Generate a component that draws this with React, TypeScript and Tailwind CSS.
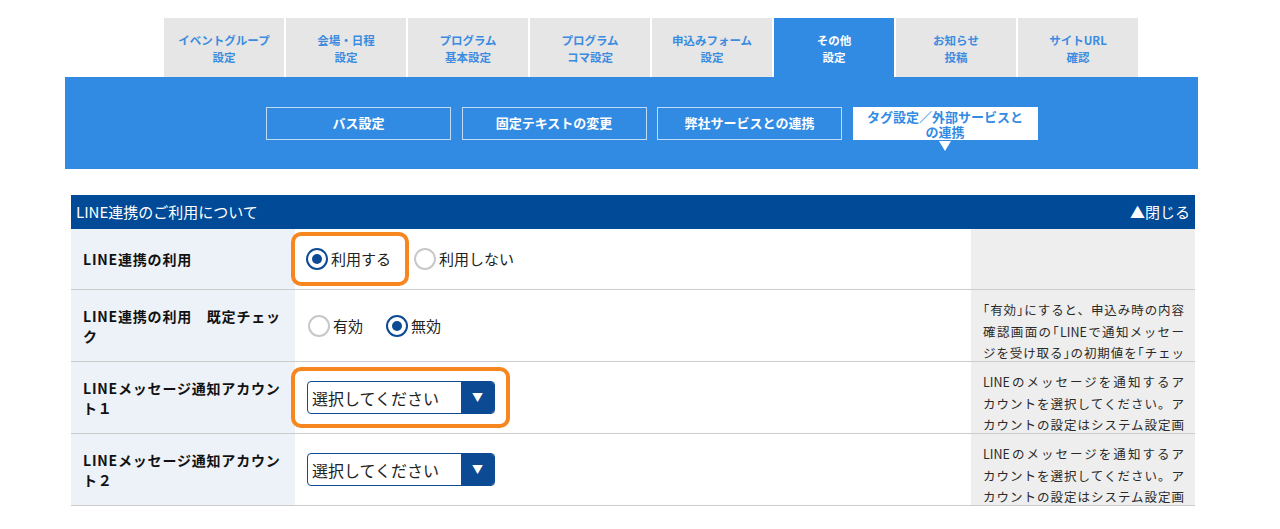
const TABS = [
  ["イベントグループ", "設定"],
  ["会場・日程", "設定"],
  ["プログラム", "基本設定"],
  ["プログラム", "コマ設定"],
  ["申込みフォーム", "設定"],
  ["その他", "設定"],
  ["お知らせ", "投稿"],
  ["サイトURL", "確認"],
];

const SUB_BUTTONS = ["バス設定", "固定テキストの変更", "弊社サービスとの連携", "タグ設定／外部サービスとの連携"];

const FONT = { fontFamily: '"Noto Sans CJK JP", "Noto Sans", sans-serif' };

// 説明文は枠内で切れるので見えている行だけ持つ
const DESC_DEFAULT = [
  "｢有効｣にすると、申込み時の内容",
  "確認画面の｢LINEで通知メッセー",
  "ジを受け取る｣の初期値を｢チェッ",
];
const DESC_ACCOUNT = [
  "LINEのメッセージを通知するア",
  "カウントを選択してください。ア",
  "カウントの設定はシステム設定画",
];

function Radio({ checked, label }: { checked: boolean; label: string }) {
  return (
    <span className="inline-flex items-center gap-[3px] text-[15px] leading-[22px] text-[#222]">
      {checked ? (
        <span className="flex h-[22px] w-[22px] items-center justify-center rounded-full border-[2.5px] border-[#0d4a94] bg-white">
          <span className="h-[10px] w-[10px] rounded-full bg-[#0d4a94]" />
        </span>
      ) : (
        <span className="h-[22px] w-[22px] rounded-full border-2 border-[#c8c8c8] bg-white" />
      )}
      {label}
    </span>
  );
}

function Select() {
  return (
    <div className="flex h-[33px] w-[188px] overflow-hidden rounded-[4px] border border-[#0d4a94] bg-white">
      <span className="flex flex-1 items-center pl-[4px] text-[16px] text-[#222]">選択してください</span>
      <span className="flex w-[33px] items-center justify-center bg-[#0d4a94] text-[11px] text-white">▼</span>
    </div>
  );
}

function Highlight({ children, box }: { children: React.ReactNode; box: string }) {
  return (
    <span className="relative inline-flex">
      <span className={`absolute rounded-[10px] border-4 border-[#f7861f] ${box}`} />
      {children}
    </span>
  );
}

function Row({
  label,
  children,
  desc,
  h,
}: {
  label: string;
  children: React.ReactNode;
  desc?: string[];
  h: string;
}) {
  return (
    <div className={`flex border-b border-[#cccccc] ${h}`}>
      <div className="flex w-[224px] items-center bg-[#edf1f8] pl-[12px] pr-[11px] text-[14px] font-bold leading-[20px] tracking-[0.8px] text-[#111]">
        {label}
      </div>
      <div className="flex flex-1 items-center px-[11px]">{children}</div>
      <div className="w-[224px] overflow-hidden bg-[#eeeeee] pl-[12px] pr-[11px] pt-[9px] text-[12.5px] leading-[21.5px] text-[#2a2a2a]">
        {desc?.map((l, i) => (
          <div key={i} className="whitespace-nowrap text-justify [text-align-last:justify]">
            {l}
          </div>
        ))}
      </div>
    </div>
  );
}

export default function App() {
  return (
    <div className="h-[529px] w-[1280px] overflow-hidden bg-white" style={FONT}>
      {/* タブ */}
      <div className="flex gap-[2px] pl-[164px] pt-[18px]">
        {TABS.map((t, i) => (
          <div
            key={i}
            className={`flex h-[59px] w-[120px] flex-col items-center justify-center pt-[2px] text-[11.5px] font-bold leading-[17px] ${
              i === 5 ? "bg-[#328be3] text-white" : "bg-[#e6e6e6] text-[#3b8ce0]"
            }`}
          >
            <span>{t[0]}</span>
            <span>{t[1]}</span>
          </div>
        ))}
      </div>

      {/* サブメニュー */}
      <div className="ml-[65px] flex h-[92px] w-[1133px] gap-[10.5px] bg-[#328be3] pl-[201px] pt-[30px]">
        {SUB_BUTTONS.map((b, i) =>
          i === 3 ? (
            <div key={b} className="relative h-[33px] w-[185px]">
              <div className="flex h-[33px] items-center justify-center bg-white px-[12px] text-center text-[13px] font-bold leading-[15px] text-[#328be3]">
                {b}
              </div>
              <span className="absolute left-[86px] top-[34px] h-0 w-0 border-x-[6px] border-t-[10px] border-x-transparent border-t-white" />
            </div>
          ) : (
            <div
              key={b}
              className="flex h-[33px] w-[185px] items-center justify-center border border-white/70 pb-[2px] text-[13px] font-bold text-white"
            >
              {b}
            </div>
          )
        )}
      </div>

      {/* LINE連携 */}
      <div className="ml-[71px] mt-[26px] w-[1124px]">
        <div className="flex h-[34px] items-center justify-between bg-[#004a97] pl-[5px] pr-[5px] text-[15px] text-white">
          <span>LINE連携のご利用について</span>
          <span>▲閉じる</span>
        </div>

        <Row label="LINE連携の利用" h="h-[61px]">
          <div className="flex items-center gap-[23px]">
            <Highlight box="-left-[15px] -right-[18px] -top-[16px] -bottom-[16px]">
              <Radio checked label="利用する" />
            </Highlight>
            <Radio checked={false} label="利用しない" />
          </div>
        </Row>

        <Row label="LINE連携の利用　既定チェック" h="h-[72px]" desc={DESC_DEFAULT}>
          <div className="flex items-center gap-[23px] pl-[2px]">
            <Radio checked={false} label="有効" />
            <Radio checked label="無効" />
          </div>
        </Row>

        <Row label="LINEメッセージ通知アカウント１" h="h-[72px]" desc={DESC_ACCOUNT}>
          <div className="pl-[1px]">
            <Highlight box="-left-[16px] -right-[15px] -top-[14px] -bottom-[14px]">
              <Select />
            </Highlight>
          </div>
        </Row>

        <Row label="LINEメッセージ通知アカウント２" h="h-[72px]" desc={DESC_ACCOUNT}>
          <div className="pl-[1px]">
            <Select />
          </div>
        </Row>
      </div>
    </div>
  );
}
